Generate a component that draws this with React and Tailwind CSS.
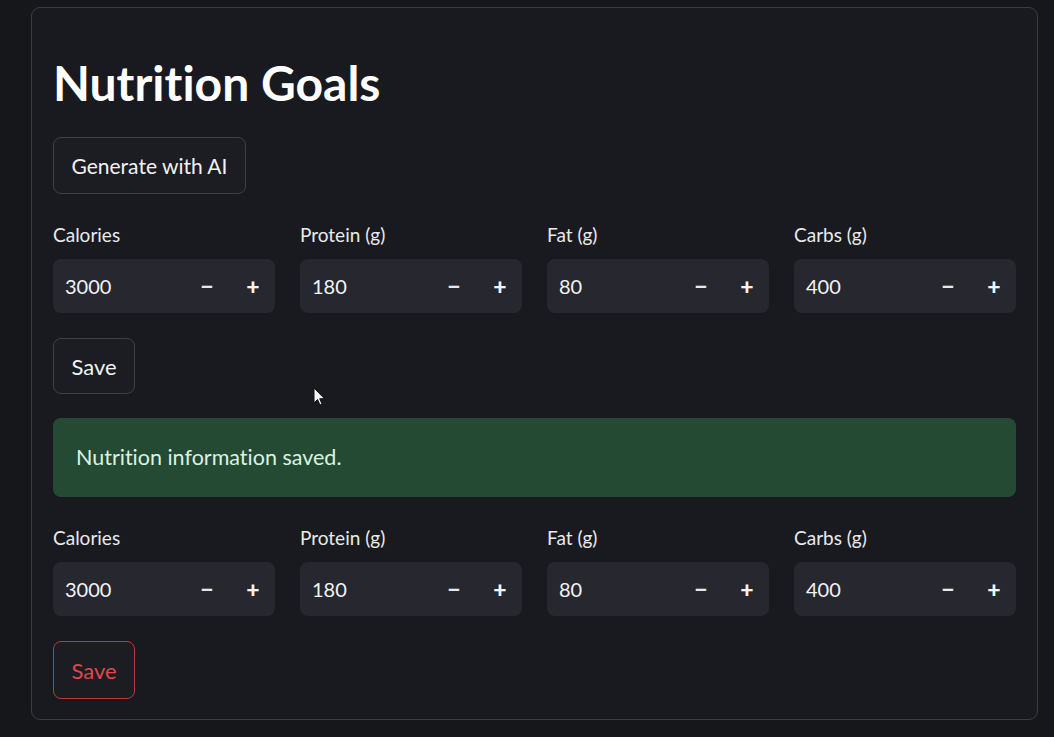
import React from "react";

const font = { fontFamily: "Lato, 'Noto Sans', sans-serif", fontVariantLigatures: "none" };

function NumInput({ value }) {
  return (
    <div className="h-[54px] rounded-[8px] bg-[#26272f] flex items-center pl-[12px] pr-[10px]">
      <span className="flex-1 text-[20px] text-[#f3f3f5]">{value}</span>
      <span className="w-[24px] text-center text-[23px] font-black text-[#e8e8ea] leading-none">−</span>
      <span className="w-[24px] ml-[22px] text-center text-[23px] font-black text-[#f3f3f5] leading-none">+</span>
    </div>
  );
}

function Row() {
  const items = [
    ["Calories", "3000"],
    ["Protein (g)", "180"],
    ["Fat (g)", "80"],
    ["Carbs (g)", "400"],
  ];
  return (
    <div className="grid grid-cols-4 gap-x-[25px]">
      {items.map(([l, v]) => (
        <div key={l} className="flex flex-col">
          <div className="h-[24px] leading-[24px] text-[19px] text-[#eaeaec]">{l}</div>
          <div className="mt-[12px]">
            <NumInput value={v} />
          </div>
        </div>
      ))}
    </div>
  );
}

export default function App() {
  return (
    <div className="w-[1054px] h-[737px] bg-[#16171b] pt-[7px] pl-[31px] relative overflow-hidden" style={font}>
      <div className="w-[1007px] h-[713px] rounded-[9px] border border-[#3a3d44] bg-[#181a1f] px-[21px] pt-[45px]">
        <h1 className="h-[60px] leading-[60px] text-[48px] font-bold text-white">Nutrition Goals</h1>
        <button className="mt-[24px] h-[57px] w-[193px] rounded-[8px] border border-[#3d4048] bg-[#1b1d23] text-[21px] text-[#f2f2f4]">
          Generate with AI
        </button>
        <div className="mt-[29px]">
          <Row />
        </div>
        <button className="mt-[25px] h-[56px] w-[82px] rounded-[8px] border border-[#3d4048] bg-[#1b1d23] text-[22px] text-[#f2f2f4] block">
          Save
        </button>
        <div className="mt-[24px] h-[79px] rounded-[8px] bg-[#244a34] flex items-center pl-[23px] text-[21.5px] text-[#dcf3e0]">
          Nutrition information saved.
        </div>
        <div className="mt-[29px]">
          <Row />
        </div>
        <button className="mt-[25px] h-[58px] w-[82px] rounded-[8px] border border-[#b8393e] bg-[#1b1d23] text-[22px] text-[#e0474c] block">
          Save
        </button>
      </div>
      <svg className="absolute left-[313px] top-[387px]" width="14" height="20" viewBox="0 0 14 20">
        <path d="M1 1 L1 16 L4.5 12.5 L7 18 L9 17 L6.7 11.7 L11.5 11.7 Z" fill="#f5f5f5" stroke="#111" strokeWidth="1" />
      </svg>
    </div>
  );
}
